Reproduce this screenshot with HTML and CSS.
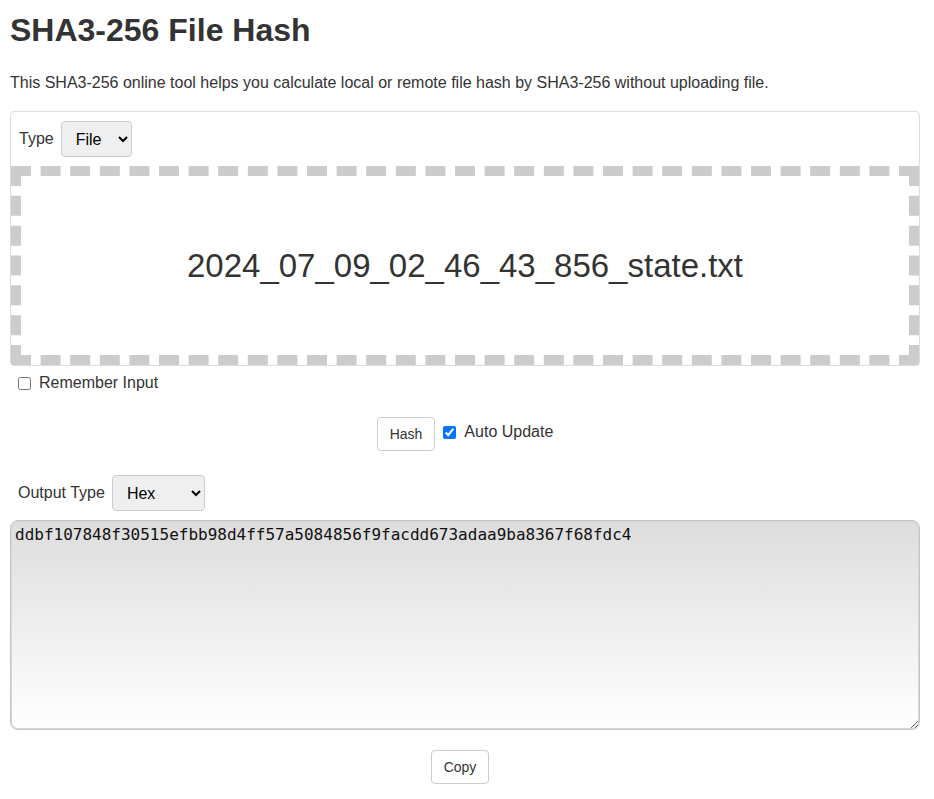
FILE: index.html
```html
<!DOCTYPE html>
<html>
<head>
<meta charset="utf-8">
<title>SHA3-256 File Hash</title>
<link rel="stylesheet" href="styles.css">
</head>
<body>
<div class="page">
  <h1 class="title">SHA3-256 File Hash</h1>
  <p class="desc">This SHA3-256 online tool helps you calculate local or remote file hash by SHA3-256 without uploading file.</p>
  <div class="panel">
    <div class="type-row">
      <label class="lbl">Type</label>
      <select class="sel sel-type"><option>File</option><option>Text</option></select>
    </div>
    <div class="drop">2024_07_09_02_46_43_856_state.txt</div>
  </div>
  <label class="remember"><input type="checkbox" class="cb"> Remember Input</label>
  <div class="actions">
    <button class="btn">Hash</button>
    <label class="auto"><input type="checkbox" class="cb" checked> Auto Update</label>
  </div>
  <div class="out-row">
    <label class="lbl">Output Type</label>
    <select class="sel sel-out"><option>Hex</option><option>Base64</option></select>
  </div>
  <textarea class="output">ddbf107848f30515efbb98d4ff57a5084856f9facdd673adaa9ba8367f68fdc4</textarea>
  <div class="copy-row"><button class="btn">Copy</button></div>
</div>
</body>
</html>
```
FILE: styles.css
```css
html, body {
  margin: 0;
  padding: 0;
  background: #fff;
}
body {
  font-family: "Liberation Sans", Arial, sans-serif;
  color: #333;
  font-size: 16px;
}
.page {
  width: 910px;
  margin-left: 10px;
}
.title {
  font-size: 32px;
  font-weight: bold;
  margin: 10px 0 0;
  line-height: 40px;
}
.desc {
  margin: 22px 0 0;
  line-height: 22px;
}
.panel {
  margin-top: 17px;
  border: 1px solid #ddd;
  border-radius: 4px;
  overflow: hidden;
}
.type-row {
  display: flex;
  align-items: center;
  padding: 9px 8px;
  gap: 7px;
}
.lbl {
  font-size: 16px;
}
.sel {
  font-family: "Liberation Sans", Arial, sans-serif;
  font-size: 16px;
  color: #000;
  background: #efefef;
  border: 1px solid #ccc;
  border-radius: 4px;
  height: 36px;
  padding: 0 6px 0 10px;
}
.sel-type { width: 71px; }
.sel-out { width: 93px; }
.drop {
  border: 10px dashed #ccc;
  height: 179px;
  display: flex;
  align-items: center;
  justify-content: center;
  font-size: 33px;
  color: #333;
}
.remember {
  display: flex;
  align-items: center;
  margin: 6px 0 0 8px;
  gap: 8px;
  height: 22px;
}
.cb {
  margin: 0;
  width: 13px;
  height: 13px;
}
.actions {
  display: flex;
  justify-content: center;
  align-items: flex-start;
  gap: 8px;
  margin-top: 23px;
}
.auto {
  display: flex;
  align-items: center;
  gap: 8px;
  margin-top: 6px;
}
.btn {
  font-family: "Liberation Sans", Arial, sans-serif;
  font-size: 14px;
  color: #333;
  background: #fff;
  border: 1px solid #ccc;
  border-radius: 4px;
  height: 34px;
  padding: 0 12px;
}
.out-row {
  display: flex;
  align-items: center;
  gap: 7px;
  margin: 24px 0 0 8px;
}
.output {
  display: block;
  box-sizing: border-box;
  width: 910px;
  height: 210px;
  margin-top: 9px;
  font-family: "DejaVu Sans Mono", monospace;
  font-size: 16px;
  color: #111;
  padding: 4px 4px;
  border: 1px solid #c4c4c4;
  box-shadow: inset 0 0 0 1px #d8d8d8;
  border-radius: 8px;
  background: linear-gradient(to bottom, #ddd, #fff);
  resize: vertical;
}
.copy-row {
  display: flex;
  justify-content: center;
  margin-top: 20px;
  padding-right: 10px;
}
```
